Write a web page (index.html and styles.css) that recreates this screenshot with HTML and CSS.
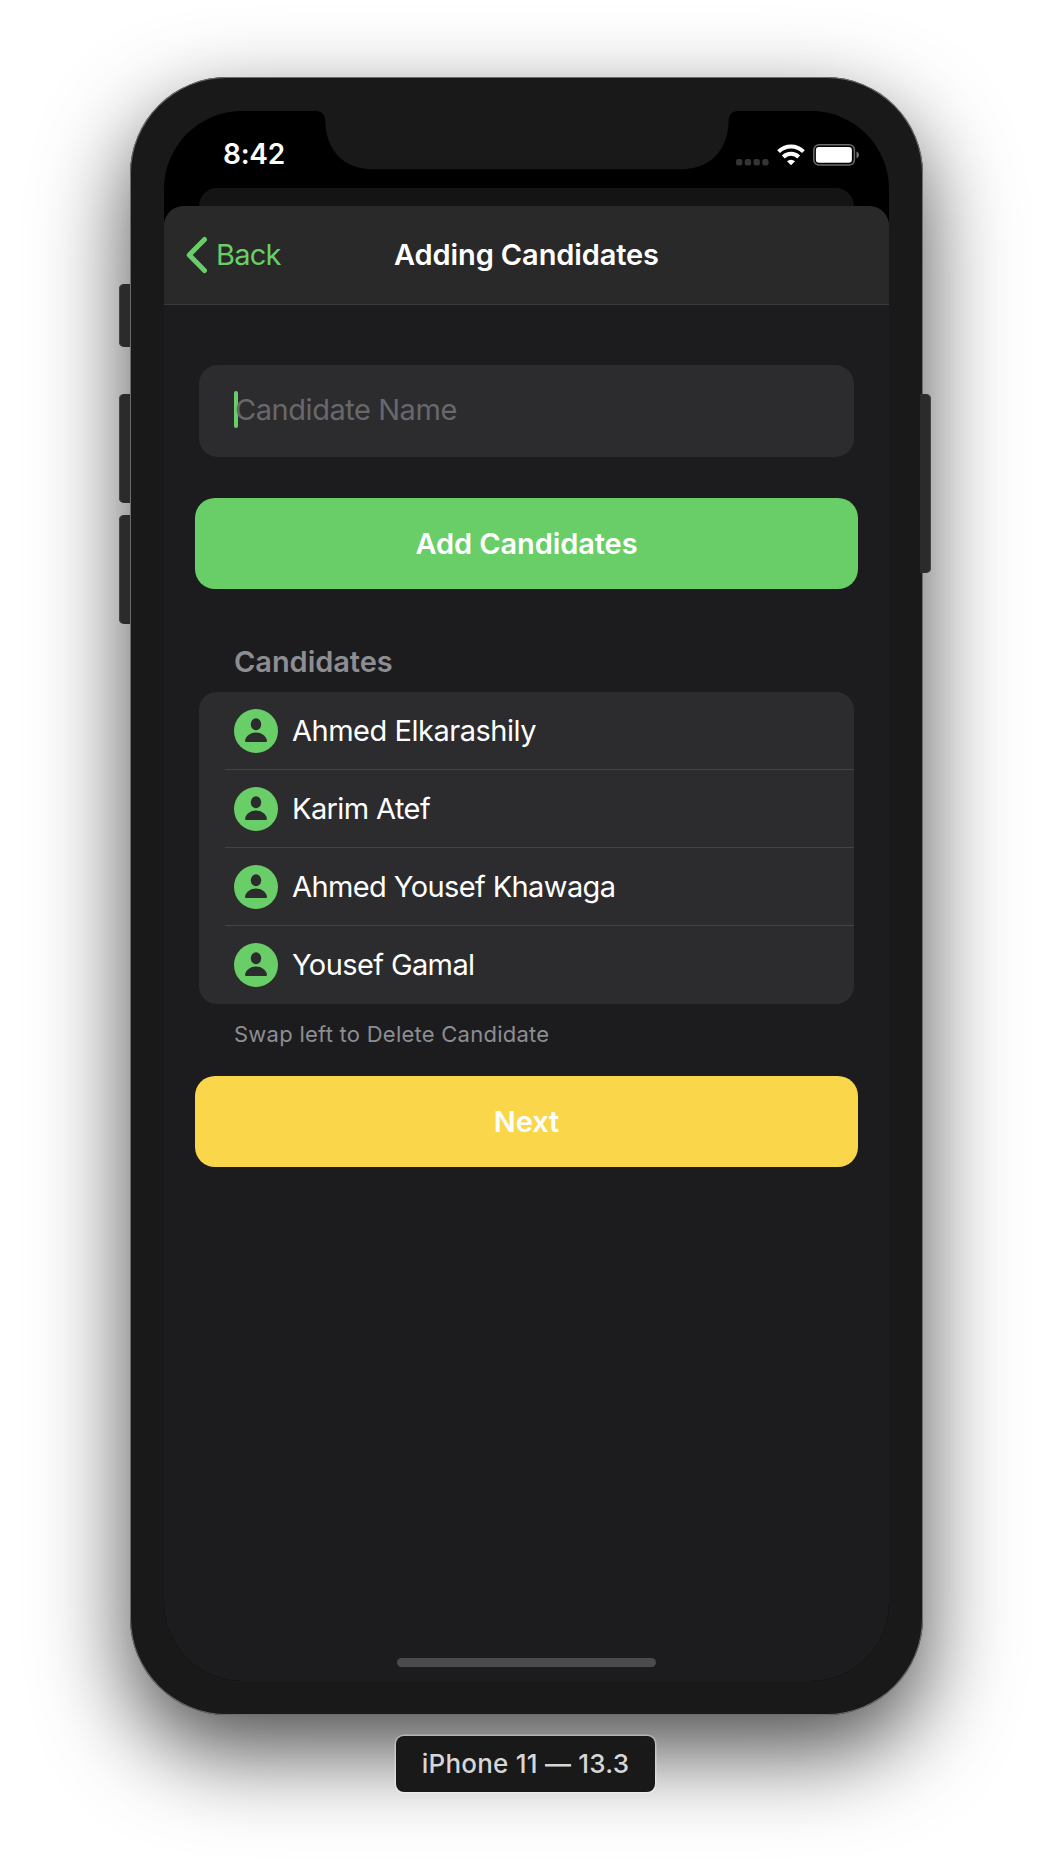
FILE: index.html
```
<!DOCTYPE html>
<html lang="en">
<head>
<meta charset="utf-8">
<title>Adding Candidates</title>
<link rel="stylesheet" href="styles.css">
</head>
<body>
<svg class="symbols" aria-hidden="true">
  <symbol id="person" viewBox="0 0 44 44">
    <circle cx="22" cy="22" r="22" fill="#69ce67"/>
    <ellipse cx="22" cy="15.2" rx="5.2" ry="6" fill="#2c2c2e"/>
    <path d="M12.6 33c-1.2 0-1.7-.6-1.5-1.8 1-4.400 5.600-7.700 10.900-7.700s9.900 3.300 10.900 7.700c.2 1.200-.3 1.800-1.500 1.800z" fill="#2c2c2e"/>
  </symbol>
</svg>
<div class="phone">
  <span class="side-button mute"></span>
  <span class="side-button volume-up"></span>
  <span class="side-button volume-down"></span>
  <span class="side-button power"></span>
  <div class="screen">
    <svg class="notch" viewBox="0 0 420 60" aria-hidden="true">
      <path d="M0 0H420V.3Q411.800 .3 411.600 10C411.400 38 394 58.300 364 58.300H56C26 58.300 8.500 38 8.300 10Q8 .3-1 .3H0z" fill="#191919"/>
    </svg>
    <header class="status">
      <span class="time">8:42</span>
      <div class="indicators">
        <svg class="signal" width="33" height="7" viewBox="0 0 33 7" fill="#343434">
          <rect width="6.400" height="6.600" rx="2.400"/><rect x="8.700" width="6.400" height="6.600" rx="2.400"/><rect x="17.500" width="6.400" height="6.600" rx="2.400"/><rect x="26.200" width="6.400" height="6.600" rx="2.400"/>
        </svg>
        <svg class="wifi" width="28" height="22" viewBox="0 0 28 22">
          <g fill="none" stroke="#fff" stroke-width="4">
            <path d="M1.600 7.600a17.600 17.600 0 0 1 24.800 0"/>
            <path d="M6.300 13a11 11 0 0 1 15.400 0"/>
          </g>
          <path d="M14 21.300l-4-4a5.700 5.700 0 0 1 8 0z" fill="#fff"/>
        </svg>
        <svg class="battery" width="47" height="22" viewBox="0 0 47 22">
          <rect x=".8" y=".8" width="40.600" height="20.200" rx="5.200" fill="none" stroke="#6b6b6b" stroke-width="1.500"/>
          <rect x="2.900" y="3" width="36" height="15.700" rx="3" fill="#fff"/>
          <path d="M43.500 7.500c3.200 1.300 3.200 5.500 0 6.800z" fill="#777"/>
        </svg>
      </div>
    </header>
    <div class="back-card"></div>
    <main class="sheet">
      <nav class="navbar">
        <a class="back"><svg width="22" height="38" viewBox="0 0 22 38"><path d="M18.500 3.500L3.200 19l15.300 15.500" fill="none" stroke="#69ce67" stroke-width="5" stroke-linecap="round" stroke-linejoin="round"/></svg><span>Back</span></a>
        <h1>Adding Candidates</h1>
      </nav>
      <div class="content">
        <div class="field"><span class="caret"></span><span class="placeholder">Candidate Name</span></div>
        <div class="button add">Add Candidates</div>
        <h2>Candidates</h2>
        <ul class="list">
          <li><svg class="avatar"><use href="#person"/></svg><span class="elkarashily">Ahmed Elkarashily</span></li>
          <li><svg class="avatar"><use href="#person"/></svg><span>Karim Atef</span></li>
          <li><svg class="avatar"><use href="#person"/></svg><span>Ahmed Yousef Khawaga</span></li>
          <li><svg class="avatar"><use href="#person"/></svg><span>Yousef Gamal</span></li>
        </ul>
        <p class="hint">Swap left to Delete Candidate</p>
        <div class="button next">Next</div>
      </div>
      <div class="home"></div>
    </main>
  </div>
</div>
<div class="device-label">iPhone 11 — 13.3</div>
</body>
</html>
```
FILE: styles.css
```
* { box-sizing: border-box; }

body {
  margin: 0;
  height: 1864px;
  overflow: hidden;
  background: #fff;
  font-family: Inter, "Liberation Sans", sans-serif;
  font-size: 29px;
  color: #fff;
  display: flex;
  flex-direction: column;
}

.symbols { display: none; }

.phone {
  position: relative;
  width: 793px;
  height: 1638px;
  margin: 77px 0 0 130px;
  padding: 34px;
  border-radius: 97px;
  background: #191919;
  box-shadow: inset 0 0 0 1px #6d6d6d, 0 36px 90px rgba(0, 0, 0, .7);
}

.side-button {
  position: absolute;
  left: -11px;
  width: 11px;
  border-radius: 5px 0 0 5px;
  background: #2b2b2b;
  box-shadow: inset 1px 0 0 #444;
}
.mute { top: 207px; height: 63px; }
.volume-up { top: 317px; height: 109px; }
.volume-down { top: 438px; height: 109px; }
.power {
  left: auto;
  right: -8px;
  top: 317px;
  width: 11px;
  height: 179px;
  border-radius: 0 5px 5px 0;
  box-shadow: inset -1px 0 0 #444;
}

.screen {
  position: relative;
  height: 1570px;
  border-radius: 78px;
  background: #000;
  overflow: hidden;
  display: flex;
  flex-direction: column;
}

.notch {
  position: absolute;
  left: 153px;
  top: 0;
  width: 420px;
  height: 60px;
}

.status {
  height: 77px;
  padding: 0 29px 0 59px;
  display: flex;
  justify-content: space-between;
  align-items: flex-start;
}
.time {
  font-size: 28px;
  font-weight: 600;
  letter-spacing: -.25px;
  line-height: 34px;
  margin-top: 26px;
}
.indicators {
  display: flex;
  align-items: flex-end;
  padding-top: 32.500px;
}
.wifi { margin-left: 8px; }
.battery { margin-left: 8px; }

.back-card {
  height: 18px;
  margin: 0 35px;
  border-radius: 18px 18px 0 0;
  background: #141414;
}

.sheet {
  flex: 1;
  border-radius: 20px 20px 0 0;
  background: #1c1c1e;
  overflow: hidden;
  display: flex;
  flex-direction: column;
}

.navbar {
  height: 99px;
  padding: 0 22px 1px;
  border-bottom: 1px solid #39393c;
  background: #292929;
  display: grid;
  grid-template-columns: 1fr auto 1fr;
  align-items: center;
}
.navbar h1 {
  margin: 0;
  font-size: 29px;
  font-weight: 600;
  letter-spacing: -.12px;
}
.back {
  display: flex;
  align-items: center;
  gap: 8px;
  color: #69ce67;
  letter-spacing: -.8px;
}

.content {
  flex: 1;
  padding: 60px 31px 0;
}

.field {
  height: 92px;
  margin: 0 4px;
  padding: 0 35px 3px;
  border-radius: 19px;
  background: #2c2c2e;
  display: flex;
  align-items: center;
}
.caret {
  width: 4px;
  height: 37px;
  margin-right: -3px;
  border-radius: 2px;
  background: #69ce67;
}
.placeholder {
  color: #68686c;
  letter-spacing: -.45px;
}

.button {
  height: 91px;
  margin-left: .4px;
  margin-right: .4px;
  border-radius: 20px;
  display: flex;
  align-items: center;
  justify-content: center;
  font-weight: 600;
  letter-spacing: -.1px;
}
.add { margin-top: 41.300px; background: #69ce67; }
.next { margin-top: 27px; background: #fad64a; }

.content h2 {
  margin: 55.700px 0 0;
  padding-left: 39px;
  font-size: 29px;
  font-weight: 600;
  line-height: 34px;
  letter-spacing: -.05px;
  color: #8d8d92;
}

.list {
  list-style: none;
  margin: 13px 4px 0;
  padding: 0 0 0 26px;
  border-radius: 18px;
  background: #2c2c2e;
}
.list li {
  height: 78px;
  padding: 1px 0 0 9px;
  border-bottom: 1px solid #434346;
  display: flex;
  align-items: center;
  gap: 14px;
  letter-spacing: -.6px;
}
.list li:last-child { border-bottom: 0; padding-top: 0; }
.list .elkarashily { letter-spacing: -.48px; }
.avatar { width: 44px; height: 44px; }

.hint {
  margin: 15px 0 0;
  padding-left: 39px;
  font-size: 22px;
  line-height: 30px;
  letter-spacing: .25px;
  color: #8d8d92;
}

.home {
  width: 259px;
  height: 9px;
  margin: 0 auto 14px;
  border-radius: 5px;
  background: #4b4b4b;
}

.device-label {
  position: relative;
  width: 259px;
  height: 56px;
  margin: 21px 0 0 396px;
  border-radius: 8px;
  background: #191919;
  box-shadow: 0 0 0 1.500px rgba(255, 255, 255, .35);
  color: #d6d6d6;
  font-size: 26px;
  font-weight: 500;
  letter-spacing: .22px;
  line-height: 56px;
  text-align: center;
}
```
